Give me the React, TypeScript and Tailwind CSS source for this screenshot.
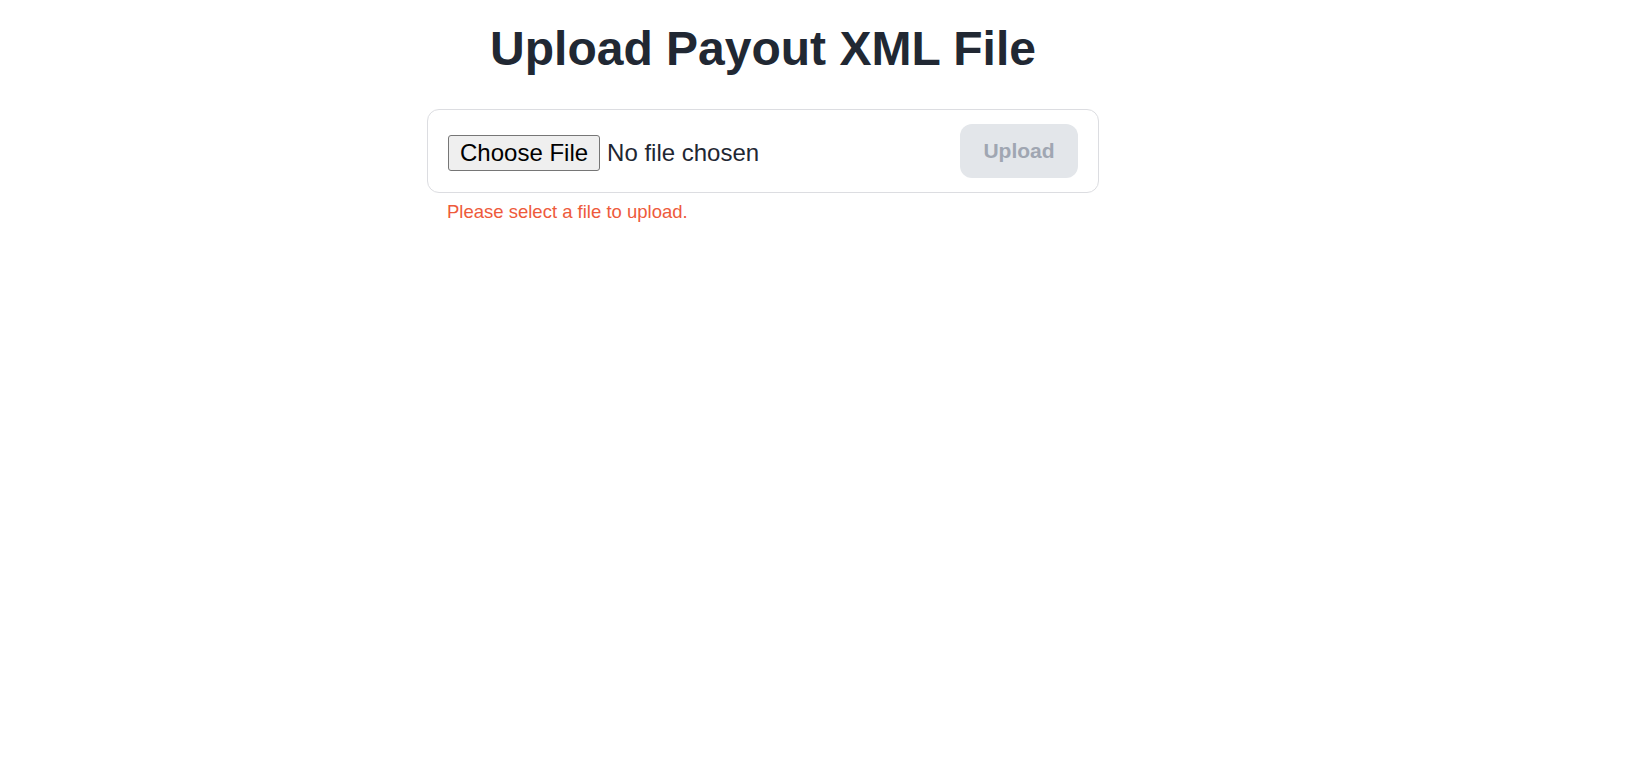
import React, { useState } from "react";

export default function App() {
  const [file, setFile] = useState<File | null>(null);

  return (
    <div className="min-h-screen w-[1526px] bg-white font-['Liberation_Sans',Arial,sans-serif] text-[#1f2733]">
      <div className="flex flex-col items-center">
        <h1 className="mt-[19px] text-5xl font-bold leading-[60px] text-[#212833]">
          Upload Payout XML File
        </h1>
        <div className="mt-[30px] w-[672px]">
          <form
            className="flex items-center justify-between rounded-xl border border-[#dcdde1] bg-white px-5 py-[14px]"
            onSubmit={(e) => e.preventDefault()}
          >
            <input
              type="file"
              accept=".xml"
              onChange={(e) => setFile(e.target.files?.[0] ?? null)}
              className="mt-[3px] text-2xl text-[#1f2733] file:mr-[7px] file:h-[36px] file:rounded-[3px] file:border file:border-[#767676] file:bg-[#efefef] file:px-[11px] file:text-black"
            />
            <button
              type="submit"
              disabled={!file}
              className="h-[54px] w-[118px] rounded-xl bg-[#e3e6ea] text-[21px] font-bold text-[#a0a6b2]"
            >
              Upload
            </button>
          </form>
          {!file && (
            <p className="mt-[5px] px-5 text-[18.5px] text-[#ee5a3b]">
              Please select a file to upload.
            </p>
          )}
        </div>
      </div>
    </div>
  );
}
